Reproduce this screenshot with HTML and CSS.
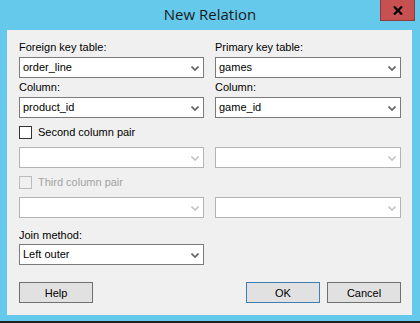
FILE: index.html
```html
<!DOCTYPE html>
<html lang="en">
<head>
  <meta charset="UTF-8">
  <title>New Relation</title>
  <link rel="stylesheet" href="styles.css">
</head>
<body>
  <div class="window">
    <div class="titlebar">
      <span class="title">New Relation</span>
      <button class="close" aria-label="Close">
        <svg width="10" height="9" viewBox="0 0 10 9">
          <path d="M1 0.5 L9 8.5 M9 0.5 L1 8.5" stroke="#000" stroke-width="2.2" fill="none"/>
        </svg>
      </button>
    </div>

    <div class="client">
      <div class="pair first">
        <span class="lbl">Foreign key table:</span>
        <span class="lbl">Primary key table:</span>
      </div>
      <div class="pair gap3">
        <div class="combo"><span>order_line</span><svg class="chev" width="8" height="5" viewBox="0 0 8 5"><path d="M0.5 0.5 L4 4 L7.5 0.5" stroke="#5f5f5f" stroke-width="1.6" fill="none"/></svg></div>
        <div class="combo"><span>games</span><svg class="chev" width="8" height="5" viewBox="0 0 8 5"><path d="M0.5 0.5 L4 4 L7.5 0.5" stroke="#5f5f5f" stroke-width="1.6" fill="none"/></svg></div>
      </div>
      <div class="pair gap3">
        <span class="lbl">Column:</span>
        <span class="lbl">Column:</span>
      </div>
      <div class="pair gap3">
        <div class="combo"><span>product_id</span><svg class="chev" width="8" height="5" viewBox="0 0 8 5"><path d="M0.5 0.5 L4 4 L7.5 0.5" stroke="#5f5f5f" stroke-width="1.6" fill="none"/></svg></div>
        <div class="combo"><span>game_id</span><svg class="chev" width="8" height="5" viewBox="0 0 8 5"><path d="M0.5 0.5 L4 4 L7.5 0.5" stroke="#5f5f5f" stroke-width="1.6" fill="none"/></svg></div>
      </div>

      <div class="check gap8">
        <span class="box"></span>
        <span>Second column pair</span>
      </div>
      <div class="pair gap8">
        <div class="combo disabled"><span></span><svg class="chev" width="8" height="5" viewBox="0 0 8 5"><path d="M0.5 0.5 L4 4 L7.5 0.5" stroke="#c4c4c4" stroke-width="1.6" fill="none"/></svg></div>
        <div class="combo disabled"><span></span><svg class="chev" width="8" height="5" viewBox="0 0 8 5"><path d="M0.5 0.5 L4 4 L7.5 0.5" stroke="#c4c4c4" stroke-width="1.6" fill="none"/></svg></div>
      </div>

      <div class="check gap8 disabled">
        <span class="box"></span>
        <span>Third column pair</span>
      </div>
      <div class="pair gap8">
        <div class="combo disabled"><span></span><svg class="chev" width="8" height="5" viewBox="0 0 8 5"><path d="M0.5 0.5 L4 4 L7.5 0.5" stroke="#c4c4c4" stroke-width="1.6" fill="none"/></svg></div>
        <div class="combo disabled"><span></span><svg class="chev" width="8" height="5" viewBox="0 0 8 5"><path d="M0.5 0.5 L4 4 L7.5 0.5" stroke="#c4c4c4" stroke-width="1.6" fill="none"/></svg></div>
      </div>

      <div class="pair join-label">
        <span class="lbl">Join method:</span>
      </div>
      <div class="pair gap2">
        <div class="combo"><span>Left outer</span><svg class="chev" width="8" height="5" viewBox="0 0 8 5"><path d="M0.5 0.5 L4 4 L7.5 0.5" stroke="#5f5f5f" stroke-width="1.6" fill="none"/></svg></div>
      </div>

      <div class="buttons">
        <button class="btn">Help</button>
        <div class="btn-group">
          <button class="btn default">OK</button>
          <button class="btn">Cancel</button>
        </div>
      </div>
    </div>
  </div>
</body>
</html>
```

FILE: styles.css
```css
* {
  box-sizing: border-box;
}

body {
  margin: 0;
  font-family: 'Liberation Sans', Arial, sans-serif;
  font-size: 11px;
  color: #000;
}

.window {
  width: 420px;
  height: 323px;
  background: #64c9ea;
  border-bottom: 2px solid #1f1f1f;
  display: flex;
  flex-direction: column;
}

.titlebar {
  position: relative;
  height: 30px;
  display: flex;
  justify-content: center;
}

.title {
  font-family: 'Open Sans', 'Noto Sans', sans-serif;
  font-size: 15px;
  line-height: 20px;
  padding-top: 4px;
  color: #1b1b1b;
}

.close {
  position: absolute;
  top: 0;
  left: 380px;
  width: 35px;
  height: 21px;
  padding: 0;
  border: 1px solid #8d3a3a;
  border-top: none;
  background: #c75050;
  display: flex;
  align-items: center;
  justify-content: center;
}

.client {
  margin: 0 8px 0 7px;
  height: 285px;
  background: #f0f0f0;
  padding: 11px 11px 12px 12px;
}

.pair {
  display: grid;
  grid-template-columns: 185px 1fr;
  column-gap: 11px;
}

.lbl {
  display: block;
  line-height: 13px;
}

.gap2 { margin-top: 2px; }
.gap3 { margin-top: 3px; }
.gap8 { margin-top: 8px; }
.join-label { margin-top: 11px; }

.combo {
  height: 21px;
  background: #fff;
  border: 1px solid #7a7a7a;
  display: flex;
  align-items: center;
  justify-content: space-between;
  padding: 0 4px 0 3px;
  line-height: 13px;
}

.combo.disabled {
  border-color: #b4b4b4;
}

.chev {
  display: block;
  margin-top: 1px;
}

.check {
  display: flex;
  align-items: center;
  gap: 6px;
  height: 13px;
  line-height: 13px;
}

.box {
  width: 13px;
  height: 13px;
  border: 1px solid #333;
  background: #fff;
}

.check.disabled {
  color: #a3a3a3;
}

.check.disabled .box {
  border-color: #bcbcbc;
  background: #f0f0f0;
}

.buttons {
  margin-top: 17px;
  display: flex;
  justify-content: space-between;
}

.btn-group {
  display: flex;
  gap: 7px;
}

.btn {
  width: 74px;
  height: 21px;
  padding: 0;
  border: 1px solid #707070;
  background: #e1e1e1;
  font-family: 'Liberation Sans', Arial, sans-serif;
  font-size: 11px;
  color: #000;
}

.btn.default {
  border-color: #3c7fb1;
}
```
